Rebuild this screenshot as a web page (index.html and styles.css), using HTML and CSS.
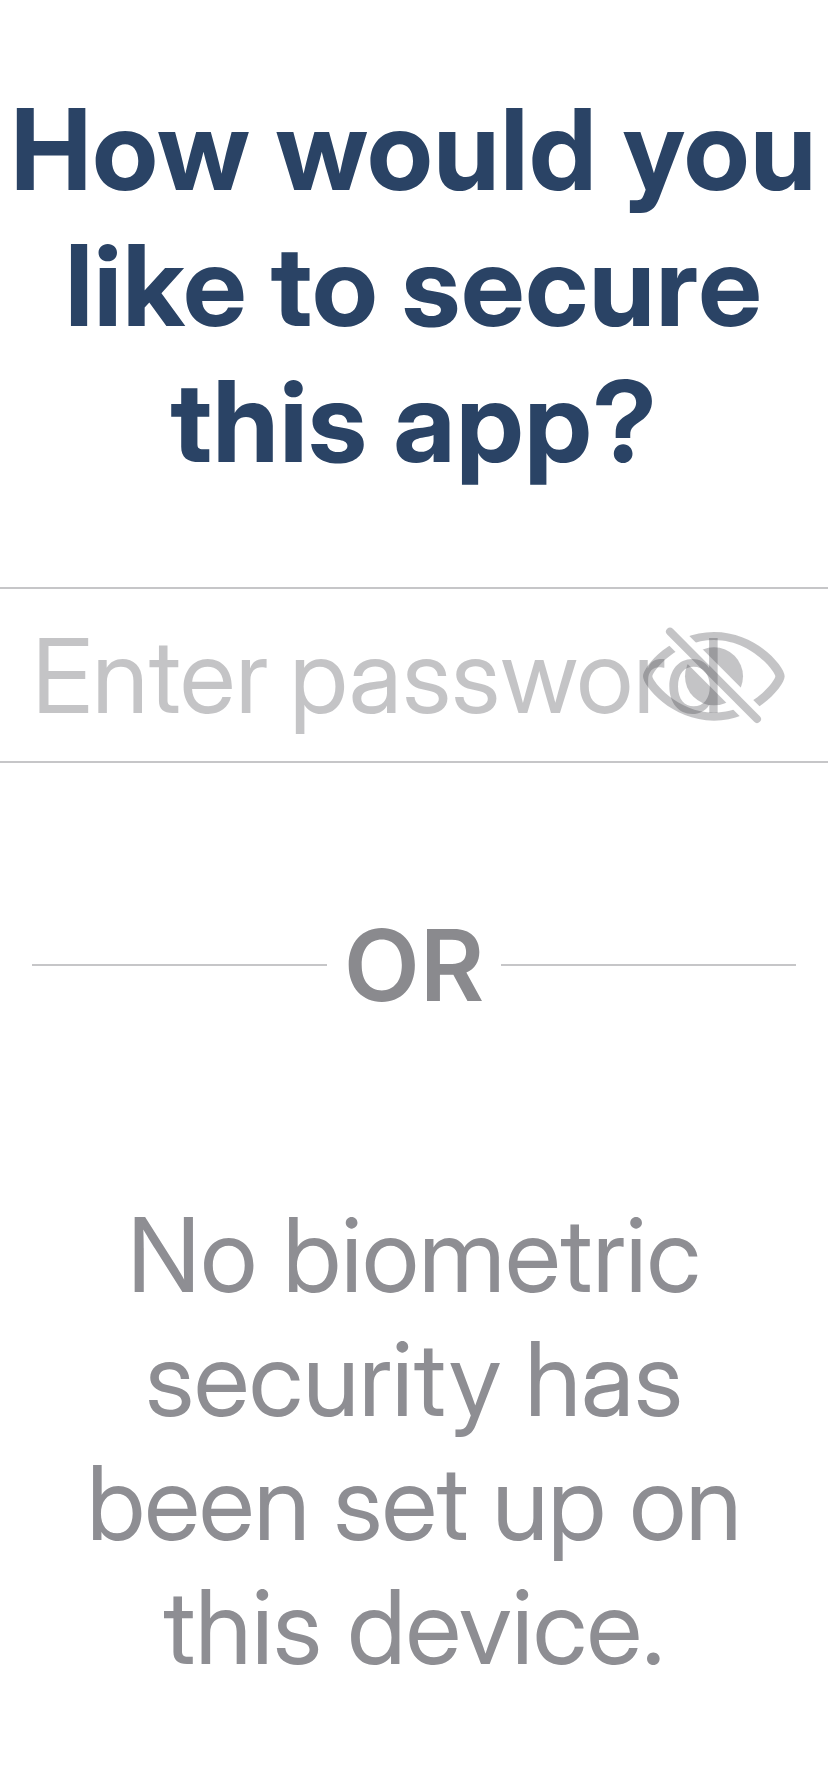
FILE: index.html
```html
<!DOCTYPE html>
<html lang="en">
<head>
<meta charset="utf-8">
<title>Secure this app</title>
<link rel="stylesheet" href="styles.css">
</head>
<body>
<main class="screen">
  <h1 class="title">How would you<br><span class="tight">like to secure</span><br>this app?</h1>
  <div class="field">
    <span class="placeholder">Enter password</span>
    <svg class="eye" viewBox="60 165 441 300" aria-hidden="true">
      <mask id="gap" maskUnits="userSpaceOnUse" x="60" y="165" width="441" height="300">
        <rect x="60" y="165" width="441" height="300" fill="#fff"/>
        <path d="M100 134.500L500 534.500" stroke="#000" stroke-width="63"/>
      </mask>
      <g mask="url(#gap)">
        <path fill-rule="evenodd" d="M69 319C69 290 155 186 282 186C409 186 494 290 494 319C494 348 409 452 282 452C155 452 69 348 69 319ZM97 319C97 333 170 428 282 428C394 428 466 333 466 319C466 305 394 210 282 210C170 210 97 305 97 319Z"/>
        <circle cx="282" cy="319" r="87"/>
      </g>
      <path class="slash" d="M150 185L411 447"/>
    </svg>
  </div>
  <div class="divider"><span class="or">OR</span></div>
  <p class="note">No biometric<br><span class="snug">security has</span><br><span class="snugger">been set up on</span><br>this device.</p>
</main>
</body>
</html>
```
FILE: styles.css
```css
body {
  margin: 0;
  background: #fff;
  font-family: "Inter Display", Inter, "Liberation Sans", sans-serif;
  font-variation-settings: "opsz" 32;
}
.screen {
  box-sizing: border-box;
  height: 1792px;
  padding-top: 81px;
  overflow: hidden;
}
.title {
  margin: 0;
  font-size: 112.4px;
  line-height: 136px;
  font-weight: 700;
  letter-spacing: 1.1px;
  text-align: center;
  white-space: nowrap;
  color: #2a4365;
}
.tight {
  word-spacing: -2px;
}
.field {
  box-sizing: border-box;
  position: relative;
  display: flex;
  align-items: center;
  height: 176px;
  margin-top: 98px;
  padding-left: 32px;
  border-top: 2px solid #c6c6c8;
  border-bottom: 2px solid #c6c6c8;
}
.placeholder {
  font-size: 103px;
  line-height: 125px;
  letter-spacing: 0.3px;
  word-spacing: -5.5px;
  white-space: nowrap;
  color: rgba(60, 60, 67, 0.3);
}
.eye {
  position: absolute;
  top: 36px;
  right: 41px;
  width: 147px;
  height: 100px;
  fill: rgba(60, 60, 67, 0.3);
}
.slash {
  fill: none;
  stroke: rgba(60, 60, 67, 0.3);
  stroke-width: 24;
  stroke-linecap: round;
}
.divider {
  display: flex;
  align-items: center;
  height: 120px;
  margin: 142px 32px 0;
}
.divider::before,
.divider::after {
  content: "";
  flex: none;
  width: 295px;
  height: 2px;
  background: #c6c6c8;
}
.or {
  flex: 1;
  display: flex;
  justify-content: center;
  font-family: Inter, "Liberation Sans", sans-serif;
  font-variation-settings: normal;
  font-size: 99px;
  line-height: 120px;
  font-weight: 600;
  color: #8a8a8e;
}
.note {
  margin: 168px 0 0;
  font-size: 103px;
  line-height: 124px;
  text-align: center;
  white-space: nowrap;
  color: #8e8e93;
}
.snug {
  letter-spacing: -0.2px;
  word-spacing: -2px;
}
.snugger {
  letter-spacing: -0.6px;
  word-spacing: -1px;
}
```
